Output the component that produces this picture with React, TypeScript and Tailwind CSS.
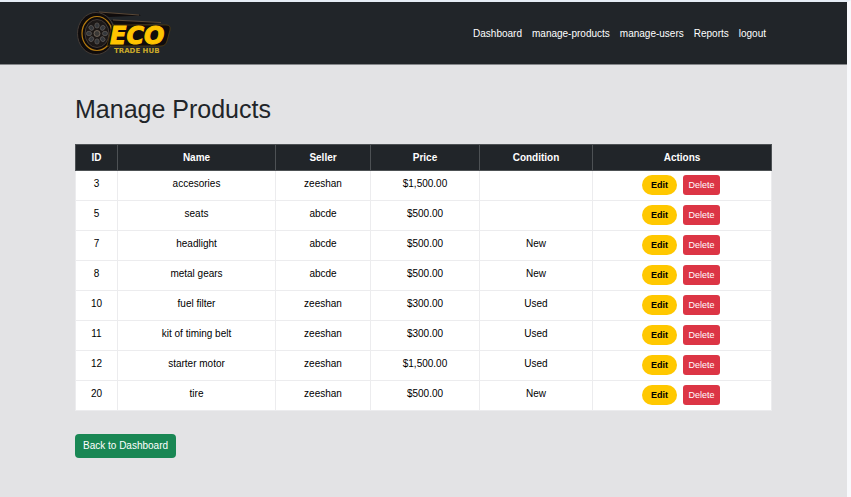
import React from "react";

type Product = {
  id: number;
  name: string;
  seller: string;
  price: string;
  condition: string;
};

const products: Product[] = [
  { id: 3, name: "accesories", seller: "zeeshan", price: "$1,500.00", condition: "" },
  { id: 5, name: "seats", seller: "abcde", price: "$500.00", condition: "" },
  { id: 7, name: "headlight", seller: "abcde", price: "$500.00", condition: "New" },
  { id: 8, name: "metal gears", seller: "abcde", price: "$500.00", condition: "New" },
  { id: 10, name: "fuel filter", seller: "zeeshan", price: "$300.00", condition: "Used" },
  { id: 11, name: "kit of timing belt", seller: "zeeshan", price: "$300.00", condition: "Used" },
  { id: 12, name: "starter motor", seller: "zeeshan", price: "$1,500.00", condition: "Used" },
  { id: 20, name: "tire", seller: "zeeshan", price: "$500.00", condition: "New" },
];

const links = ["Dashboard", "manage-products", "manage-users", "Reports", "logout"];

const columns = [
  { title: "ID", width: "w-[42px]" },
  { title: "Name", width: "w-[158px]" },
  { title: "Seller", width: "w-[95px]" },
  { title: "Price", width: "w-[109px]" },
  { title: "Condition", width: "w-[113px]" },
  { title: "Actions", width: "" },
];

const bolts = [0, 45, 90, 135, 180, 225, 270, 315];

function Logo() {
  return (
    <svg viewBox="0 0 100 50" className="h-[50px] w-[100px]" role="img" aria-label="Eco Trade Hub">
      <path d="M20 3.500 L64 6.500 L66 7.500 L34 9 Z" fill="#100c0c" />
      <path d="M36 12 L86 14 L86 15 L40 18 Z" fill="#100c0c" />
      <path d="M24 4 L64 7 M38 12 L86 14.500" stroke="#7a634a" strokeWidth="0.700" fill="none" />
      <ellipse cx="21" cy="25.500" rx="18.500" ry="21" fill="#0f0b0b" stroke="#4a3f39" strokeWidth="0.900" />
      <ellipse cx="22" cy="25.500" rx="15" ry="17" fill="none" stroke="#b47a10" strokeWidth="1.200" />
      <ellipse cx="22" cy="25.500" rx="12" ry="14" fill="#1c1817" stroke="#4c443f" strokeWidth="0.800" />
      {bolts.map((angle) => (
        <g key={angle} transform={`rotate(${angle} 22 25.500)`}>
          <ellipse cx="22" cy="17.500" rx="2.200" ry="2.600" fill="#34373b" stroke="#6d6660" strokeWidth="0.600" />
        </g>
      ))}
      <circle cx="22" cy="25.500" r="3" fill="#3a3836" stroke="#8a7a68" strokeWidth="0.700" />
      <path d="M37 17 H91 Q96 17 95 22 L92 33 Q90.500 38 86 38 H32 Z" fill="#100c0c" stroke="#5b4310" strokeWidth="0.700" />
      <text
        x="35"
        y="36"
        fontSize="24"
        fontWeight="700"
        fontStyle="italic"
        fill="#ffc400"
        stroke="#ffc400"
        strokeWidth="1"
        className="font-['DejaVu_Sans',sans-serif]"
      >
        ECO
      </text>
      <text x="39" y="45" fontSize="7" fontWeight="700" fill="#c9a82a" className="font-['DejaVu_Sans',sans-serif]">
        TRADE HUB
      </text>
    </svg>
  );
}

export default function App() {
  return (
    <div className="min-h-screen border-t-2 border-r-4 border-t-[#e6edf5] border-r-[#f8f9fc] bg-[#e3e3e5] font-['Liberation_Sans',Arial,sans-serif] text-[10px] text-black">
      <header className="border-b border-[#85878a] bg-[#212529]">
        <div className="mx-auto flex h-[62px] max-w-[697px] items-center justify-between">
          <a href="#home">
            <Logo />
          </a>
          <nav className="flex gap-[10px] pr-[6px] text-white">
            {links.map((link) => (
              <a key={link} href={`#${link}`}>
                {link}
              </a>
            ))}
          </nav>
        </div>
      </header>

      <main className="mx-auto max-w-[697px] pt-[29px]">
        <h1 className="text-[25px] leading-[30px] text-[#212529]">Manage Products</h1>

        <table className="mt-[20px] w-full table-fixed border-collapse bg-white text-center">
          <thead>
            <tr className="h-[26px] bg-[#212529] text-white">
              {columns.map((column) => (
                <th key={column.title} scope="col" className={`${column.width} border border-[#4d5154] p-0 font-bold`}>
                  {column.title}
                </th>
              ))}
            </tr>
          </thead>
          <tbody className="leading-[16px]">
            {products.map((product) => (
              <tr key={product.id} className="h-[30px] align-top">
                <td className="border border-[#ececee] pt-[5px]">{product.id}</td>
                <td className="border border-[#ececee] pt-[5px]">{product.name}</td>
                <td className="border border-[#ececee] pt-[5px]">{product.seller}</td>
                <td className="border border-[#ececee] pt-[5px]">{product.price}</td>
                <td className="border border-[#ececee] pt-[5px]">{product.condition}</td>
                <td className="border border-[#ececee] pt-[4px] pr-[2px]">
                  <div className="flex justify-center gap-[6px] text-[9px]">
                    <button type="button" className="h-[20px] w-[35px] rounded-full bg-[#ffc800] font-bold">
                      Edit
                    </button>
                    <button type="button" className="h-[20px] w-[37px] rounded-[3px] bg-[#dc3545] text-white">
                      Delete
                    </button>
                  </div>
                </td>
              </tr>
            ))}
          </tbody>
        </table>

        <a
          href="#dashboard"
          className="mt-[23px] inline-block rounded-[4px] bg-[#198754] px-[8px] py-[4px] leading-[16px] text-white"
        >
          Back to Dashboard
        </a>
      </main>
    </div>
  );
}
